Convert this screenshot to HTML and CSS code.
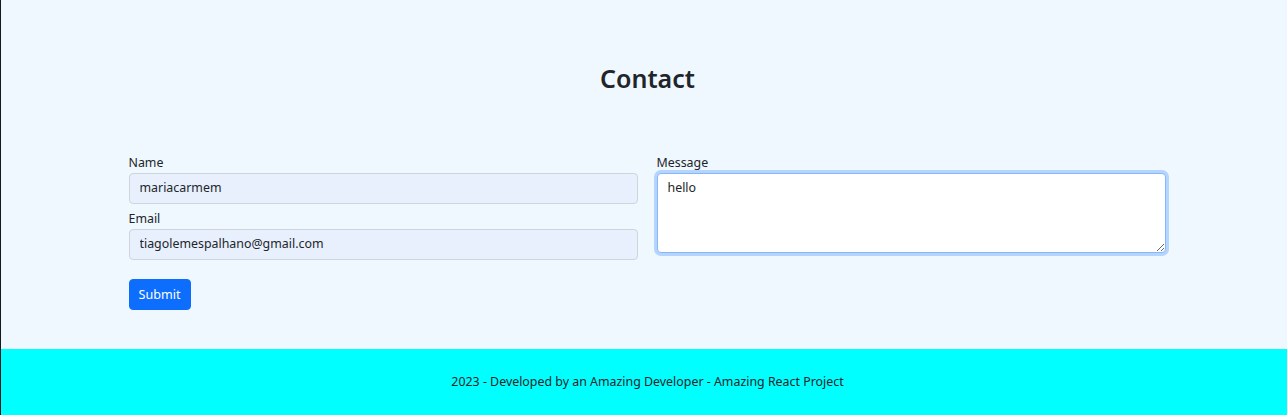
FILE: index.html
```html
<!DOCTYPE html>
<html lang="en">
<head>
<meta charset="utf-8">
<title>Contact</title>
<link rel="stylesheet" href="styles.css">
</head>
<body>
<div class="app">
  <main class="main">
    <div class="container">
      <h2 class="title">Contact</h2>
      <form class="form">
        <div class="grid">
          <div class="col">
            <label class="label" for="name">Name</label>
            <input class="control autofill" id="name" type="text" value="mariacarmem">
            <label class="label label-gap" for="email">Email</label>
            <input class="control autofill" id="email" type="email" value="tiagolemespalhano@gmail.com">
          </div>
          <div class="col">
            <label class="label" for="msg">Message</label>
            <textarea class="control area focus" id="msg">hello</textarea>
          </div>
        </div>
        <button class="btn" type="button">Submit</button>
      </form>
    </div>
  </main>
  <footer class="footer">2023 - Developed by an Amazing Developer - Amazing React Project</footer>
</div>
</body>
</html>
```
FILE: styles.css
```css
* { box-sizing: border-box; }
html, body { margin: 0; padding: 0; }
body {
  font-family: "Noto Sans", "Open Sans", sans-serif;
  color: #212529;
  background: #eff7ff;
  font-size: 14px;
}
.app {
  border-left: 1px solid #16191c;
  min-height: 415px;
  display: flex;
  flex-direction: column;
}
.main {
  background: #eff7ff;
  height: 349px;
}
.container {
  width: 1045px;
  margin: 0 auto;
  padding-left: 7px;
}
.title {
  margin: 0;
  padding-top: 61px;
  height: 152px;
  text-align: center;
  font-size: 25px;
  font-weight: 600;
  line-height: 34px;
  color: #212529;
}
.grid {
  display: grid;
  grid-template-columns: 509px 509px;
  column-gap: 19px;
}
.col { display: flex; flex-direction: column; }
.label {
  display: block;
  font-size: 12.4px;
  line-height: 21px;
  color: #212529;
}
.label-gap { margin-top: 4px; }
.control {
  display: block;
  width: 100%;
  height: 31px;
  padding: 3px 10px 5px;
  font-family: inherit;
  font-size: 12.4px;
  line-height: 21px;
  color: #212529;
  background: #fff;
  border: 1px solid #ced4da;
  border-radius: 4px;
  outline: none;
}
.autofill { background: #e8f0fe; }
.area {
  height: 80px;
  resize: vertical;
}
.focus {
  border-color: #86b7fe;
  box-shadow: 0 0 0 3px rgba(13, 110, 253, 0.25);
}
.btn {
  margin-top: 19px;
  width: 62px;
  height: 31px;
  padding: 0;
  font-family: inherit;
  font-size: 12.6px;
  color: #fff;
  background: #0d6efd;
  border: 1px solid #0d6efd;
  border-radius: 4px;
}
.footer {
  background: #00ffff;
  height: 66px;
  display: flex;
  align-items: center;
  justify-content: center;
  font-size: 12.4px;
  color: #212529;
  padding-left: 7px;
  padding-bottom: 2px;
}
```
